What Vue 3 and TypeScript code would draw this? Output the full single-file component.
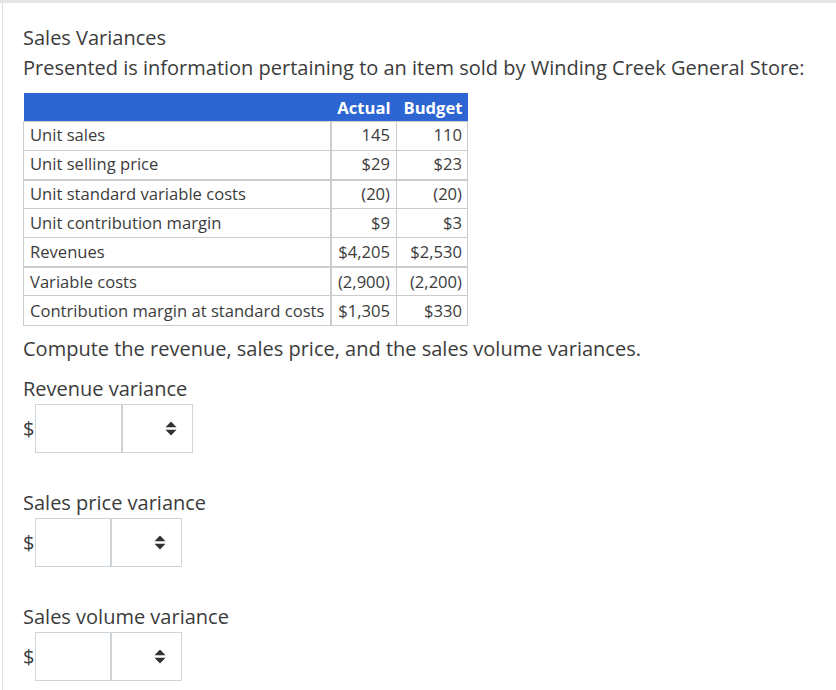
<script setup lang="ts">
const rows = [
  { label: 'Unit sales', actual: '145', budget: '110' },
  { label: 'Unit selling price', actual: '$29', budget: '$23' },
  { label: 'Unit standard variable costs', actual: '(20)', budget: '(20)' },
  { label: 'Unit contribution margin', actual: '$9', budget: '$3' },
  { label: 'Revenues', actual: '$4,205', budget: '$2,530' },
  { label: 'Variable costs', actual: '(2,900)', budget: '(2,200)' },
  { label: 'Contribution margin at standard costs', actual: '$1,305', budget: '$330' },
]

const fields = [
  { label: 'Revenue variance', wide: true },
  { label: 'Sales price variance', wide: false },
  { label: 'Sales volume variance', wide: false },
]
</script>

<template>
  <div class="page">
    <main class="sheet">
      <h1 class="title">Sales Variances</h1>
      <p class="intro">Presented is information pertaining to an item sold by Winding Creek General Store:</p>

      <table class="data">
        <colgroup>
          <col class="data__col-label" />
          <col class="data__col-actual" />
          <col />
        </colgroup>
        <thead>
          <tr>
            <th></th>
            <th class="data__actual">Actual</th>
            <th>Budget</th>
          </tr>
        </thead>
        <tbody>
          <tr v-for="row in rows" :key="row.label">
            <td class="data__label">{{ row.label }}</td>
            <td class="data__actual">{{ row.actual }}</td>
            <td>{{ row.budget }}</td>
          </tr>
        </tbody>
      </table>

      <p class="prompt">Compute the revenue, sales price, and the sales volume variances.</p>

      <section v-for="field in fields" :key="field.label" class="field">
        <label class="field__label">{{ field.label }}</label>
        <div class="field__row">
          <span class="field__unit">$</span>
          <div class="field__box" :class="{ 'field__box--wide': field.wide }">
            <div class="field__input"></div>
            <div class="field__select">
              <svg width="12" height="15" viewBox="0 0 12 15" aria-hidden="true">
                <path d="M6 .5 L11.5 6.3 H.5 Z M.5 8.7 H11.5 L6 14.5 Z" fill="#333" />
              </svg>
            </div>
          </div>
        </div>
      </section>
    </main>
  </div>
</template>

<style>
html,
body {
  margin: 0;
  background: #fff;
}
</style>

<style scoped>
.page {
  box-sizing: border-box;
  width: 836px;
  height: 690px;
  overflow: hidden;
  border-top: 3px solid #e5e5e5;
  color: #3c3c3c;
  font-family: "Open Sans", sans-serif;
}

.sheet {
  box-sizing: border-box;
  height: 100%;
  margin-left: 2px;
  padding: 20px 0 0 20px;
  border-left: 1px solid #e0e0e0;
}

.title,
.intro,
.prompt {
  margin: 0;
  font-size: 20px;
  font-weight: 400;
  line-height: 30px;
}

.data {
  width: 445px;
  margin-top: 10px;
  border-collapse: collapse;
  table-layout: fixed;
  font-size: 16.6px;
}

.data__col-label {
  width: 307px;
}

.data__col-actual {
  width: 66px;
}

.data th {
  height: 28px;
  padding: 0 5px;
  background: #2d65d2;
  color: #fff;
  font-weight: 700;
  text-align: right;
}

.data td {
  box-sizing: border-box;
  height: 29px;
  padding: 0 5px 3px;
  border: 1px solid #ccc;
  text-align: right;
  white-space: nowrap;
}

.data tbody tr:nth-child(3) td,
.data tbody tr:nth-child(6) td {
  border-top-width: 2px;
}

.data tbody tr:nth-child(n + 3) td {
  padding-bottom: 1px;
}

.data tbody tr:nth-child(n + 6) td {
  padding-bottom: 0;
}

.data tbody tr:last-child td {
  height: 30px;
}

.data .data__actual {
  padding-right: 6px;
}

.data td.data__actual {
  border-left-width: 2px;
}

.data .data__label {
  text-align: left;
  padding-left: 6px;
}

.prompt {
  margin-top: 8px;
}

.field {
  margin-top: 10px;
  height: 104px;
}

.field__label {
  display: block;
  font-size: 20px;
  line-height: 30px;
}

.field__row {
  display: flex;
  align-items: center;
}

.field__unit {
  width: 12px;
  font-size: 20px;
}

.field__box {
  box-sizing: border-box;
  display: flex;
  width: 147px;
  height: 49px;
  border: 1px solid #cdd4da;
}

.field__box--wide {
  width: 158px;
}

.field__input {
  flex: 1;
  border-right: 2px solid #cdd2d6;
}

.field__select {
  box-sizing: border-box;
  display: flex;
  flex: 0 0 69px;
  align-items: center;
  justify-content: flex-end;
  padding-right: 15px;
}
</style>
